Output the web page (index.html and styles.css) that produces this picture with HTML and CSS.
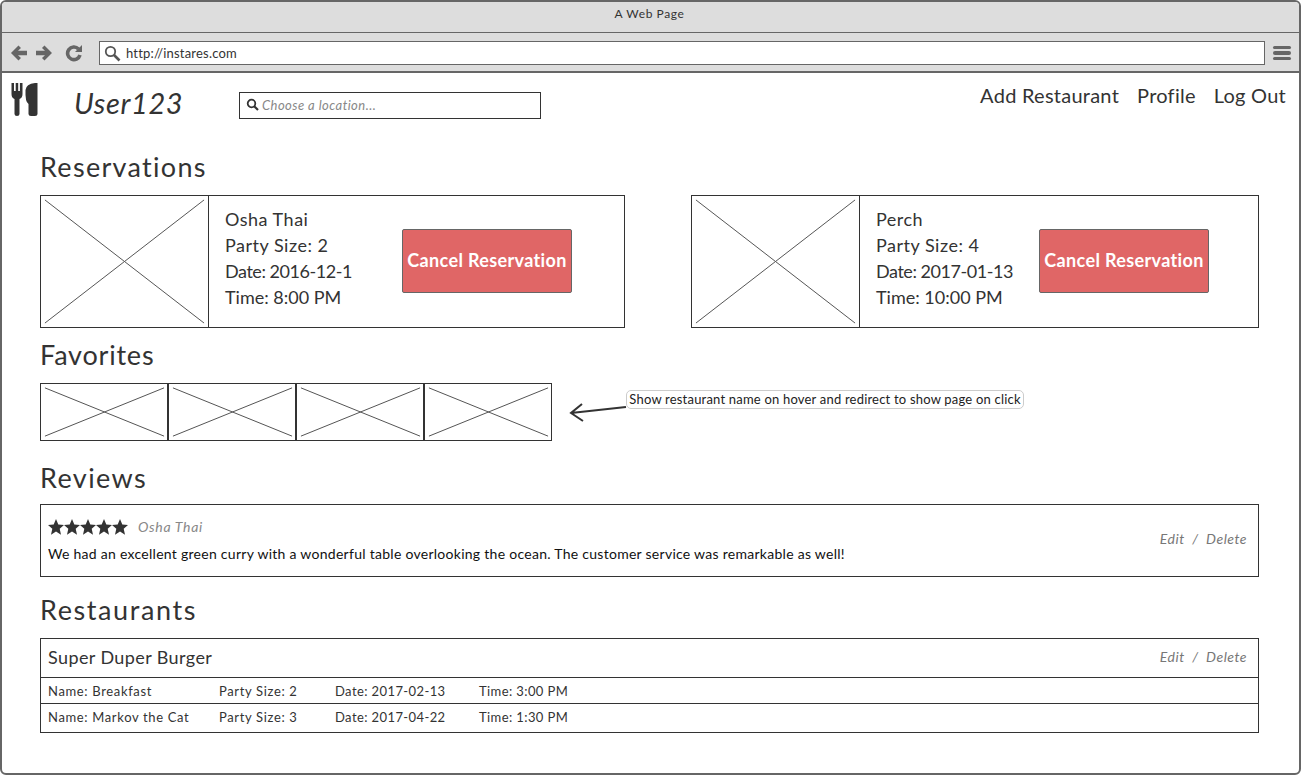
FILE: index.html
```html
<!DOCTYPE html>
<html lang="en">
<head>
    <meta charset="UTF-8">
    <meta name="viewport" content="width=device-width, initial-scale=1.0">
    <title>A Web Page</title>
    <link rel="stylesheet" href="styles.css">
</head>
<body>
    <div class="window">
        <div class="title-bar">A Web Page</div>
        <div class="toolbar">
            <svg class="nav-icon" width="18" height="18" viewBox="0 0 18 18"><path d="M8.500 1.500 L1 9 L8.500 16.500 L11 14 L8 11.300 H17 V6.700 H8 L11 4 Z" fill="#666"/></svg>
            <svg class="nav-icon" width="18" height="18" viewBox="0 0 18 18"><path d="M9.500 1.500 L17 9 L9.500 16.500 L7 14 L10 11.300 H1 V6.700 H10 L7 4 Z" fill="#666"/></svg>
            <svg class="nav-icon reload" width="18" height="18" viewBox="0 0 18 18"><path d="M13.500 5 A6.300 6.300 0 1 0 15 11" fill="none" stroke="#666" stroke-width="3.600"/><path d="M10 8 H17 V1 Z" fill="#666"/></svg>
            <div class="url-bar">
                <svg width="17" height="17" viewBox="0 0 17 17"><circle cx="6.500" cy="6.500" r="4.700" fill="none" stroke="#555" stroke-width="1.800"/><path d="M10 10 L15.500 15.500" stroke="#555" stroke-width="2.600"/></svg>
                <span>http://instares.com</span>
            </div>
            <div class="menu-icon"><i></i><i></i><i></i></div>
        </div>

        <div class="app-header">
            <svg class="logo" width="27" height="33" viewBox="0 0 27 33">
                <path d="M0.500 0 H3 V8 H4.700 V0 H7.200 V8 H8.900 V0 H11.500 V11 Q11.500 15 8.500 16 V31 Q8.500 33 6 33 Q3.500 33 3.500 31 V16 Q0.500 15 0.500 11 Z" fill="#333"/>
                <path d="M14.500 7 Q15 1 24 0 H26.500 V31 Q26.500 33 24 33 H20 Q17.500 33 17.500 31 V21 Q14 19 14.500 7 Z" fill="#333"/>
            </svg>
            <div class="user-name">User123</div>
            <div class="location-box">
                <svg width="13" height="13" viewBox="0 0 13 13"><circle cx="5.500" cy="5.500" r="3.800" fill="none" stroke="#333" stroke-width="1.800"/><path d="M8.200 8.200 L12 12" stroke="#333" stroke-width="2.200"/></svg>
                <span>Choose a location...</span>
            </div>
            <nav class="top-nav">
                <a>Add Restaurant</a>
                <a>Profile</a>
                <a>Log Out</a>
            </nav>
        </div>

        <div class="content">
            <h2>Reservations</h2>
            <div class="reservations">
                <div class="res-card res-card-first">
                    <svg class="placeholder res-img" viewBox="0 0 169 133" preserveAspectRatio="none"><path d="M4 4 L165 129 M165 4 L4 129"/></svg>
                    <div class="res-info">
                        <div>Osha Thai</div>
                        <div>Party Size: 2</div>
                        <div class="res-date">Date: 2016-12-1</div>
                        <div class="res-time">Time: 8:00 PM</div>
                    </div>
                    <button class="cancel-btn">Cancel Reservation</button>
                </div>
                <div class="res-card">
                    <svg class="placeholder res-img" viewBox="0 0 169 133" preserveAspectRatio="none"><path d="M4 4 L165 129 M165 4 L4 129"/></svg>
                    <div class="res-info">
                        <div>Perch</div>
                        <div>Party Size: 4</div>
                        <div class="res-date">Date: 2017-01-13</div>
                        <div class="res-time">Time: 10:00 PM</div>
                    </div>
                    <button class="cancel-btn">Cancel Reservation</button>
                </div>
            </div>

            <h2 class="section-title favorites-title">Favorites</h2>
            <div class="favorites">
                <svg class="placeholder thumb" viewBox="0 0 128 58" preserveAspectRatio="none"><path d="M4 4 L125 54 M125 4 L4 54"/></svg>
                <svg class="placeholder thumb" viewBox="0 0 128 58" preserveAspectRatio="none"><path d="M4 4 L125 54 M125 4 L4 54"/></svg>
                <svg class="placeholder thumb" viewBox="0 0 128 58" preserveAspectRatio="none"><path d="M4 4 L125 54 M125 4 L4 54"/></svg>
                <svg class="placeholder thumb" viewBox="0 0 128 58" preserveAspectRatio="none"><path d="M4 4 L125 54 M125 4 L4 54"/></svg>
                <svg class="note-arrow" width="58" height="24" viewBox="0 0 58 24"><path d="M57 7 L2 13 M13 4 L2 13 L14 21" fill="none" stroke="#333" stroke-width="2"/></svg>
                <div class="note">Show restaurant name on hover and redirect to show page on click</div>
            </div>

            <h2 class="section-title reviews-title">Reviews</h2>
            <div class="review">
                <div class="review-body">
                    <div class="review-top">
                        <svg width="80" height="16" viewBox="0 0 80 16">
                            <defs><polygon id="star" points="8,0 10.300,5.400 16,5.900 11.700,9.800 13,15.700 8,12.500 3,15.700 4.300,9.800 0,5.900 5.700,5.400"/></defs>
                            <use href="#star" fill="#333"/>
                            <use href="#star" x="16" fill="#333"/>
                            <use href="#star" x="32" fill="#333"/>
                            <use href="#star" x="48" fill="#333"/>
                            <use href="#star" x="64" fill="#333"/>
                        </svg>
                        <span class="review-name">Osha Thai</span>
                    </div>
                    <p>We had an excellent green curry with a wonderful table overlooking the ocean. The customer service was remarkable as well!</p>
                </div>
                <div class="actions">Edit &nbsp;/&nbsp; Delete</div>
            </div>

            <h2 class="section-title restaurants-title">Restaurants</h2>
            <div class="restaurant">
                <div class="restaurant-head">
                    <span>Super Duper Burger</span>
                    <div class="actions">Edit &nbsp;/&nbsp; Delete</div>
                </div>
                <div class="booking">
                    <span>Name: Breakfast</span>
                    <span>Party Size: 2</span>
                    <span>Date: 2017-02-13</span>
                    <span>Time: 3:00 PM</span>
                </div>
                <div class="booking booking-last">
                    <span>Name: Markov the Cat</span>
                    <span>Party Size: 3</span>
                    <span>Date: 2017-04-22</span>
                    <span>Time: 1:30 PM</span>
                </div>
            </div>
        </div>
    </div>
</body>
</html>
```

FILE: styles.css
```css
* {
    box-sizing: border-box;
}
body {
    font-family: Lato, "Open Sans", sans-serif;
    margin: 0;
    padding: 0;
    background-color: #fff;
    color: #333;
}
.window {
    height: 775px;
    border: 2px solid #666;
    border-radius: 6px;
    overflow: hidden;
}
.title-bar {
    height: 31px;
    background-color: #ddd;
    border-bottom: 1px solid #666;
    text-align: center;
    font-size: 12px;
    line-height: 24px;
    letter-spacing: 0.6px;
    padding-right: 2px;
}
.toolbar {
    height: 40px;
    background-color: #ddd;
    border-bottom: 2px solid #666;
    display: flex;
    align-items: center;
    padding: 2px 8px 0;
}
.nav-icon {
    margin-right: 7px;
}
.reload {
    margin-left: 5px;
    margin-right: 16px;
}
.url-bar {
    width: 1167px;
    height: 24px;
    background: #fff;
    border: 1px solid #666;
    display: flex;
    align-items: center;
    padding-left: 4px;
    font-size: 13px;
}
.url-bar span {
    margin-left: 5px;
    letter-spacing: 0.2px;
}
.menu-icon {
    margin-left: 8px;
    width: 18px;
}
.menu-icon i {
    display: block;
    height: 3.5px;
    margin: 2px 0;
    background-color: #666;
    border-radius: 2px;
}
.app-header {
    height: 77px;
    display: flex;
    align-items: flex-start;
    padding: 10px 13px 0 9px;
}
.user-name {
    margin-left: 36px;
    width: 165px;
    font-size: 29px;
    font-style: italic;
    line-height: 40px;
    letter-spacing: 0.6px;
}
.location-box {
    margin-top: 9px;
    width: 302px;
    height: 27px;
    border: 1px solid #333;
    display: flex;
    align-items: center;
    padding: 0 0 2px 6px;
    font-size: 13px;
    font-style: italic;
    color: #888;
}
.location-box span {
    margin-left: 3px;
    letter-spacing: 0.45px;
}
.top-nav {
    margin-left: auto;
    display: flex;
    gap: 18px;
    font-size: 20px;
    line-height: 25px;
    letter-spacing: 0.25px;
}
.content {
    padding: 0 40px 0 38px;
}
h2 {
    margin: 0 0 11px;
    font-size: 27px;
    font-weight: 400;
    line-height: 34px;
    letter-spacing: 1.3px;
}
.section-title {
    margin-top: 10px;
}
.favorites-title {
    letter-spacing: 0.8px;
}
.reviews-title {
    margin-top: 20px;
    margin-bottom: 9px;
    letter-spacing: 1.4px;
}
.restaurants-title {
    margin-top: 16px;
    letter-spacing: 1.6px;
}
.reservations {
    display: flex;
    justify-content: space-between;
}
.res-card {
    width: 568px;
    height: 133px;
    border: 1px solid #333;
    display: flex;
    align-items: center;
    justify-content: space-between;
    padding-right: 49px;
}
.res-card-first {
    width: 585px;
    padding-right: 52px;
}
.placeholder {
    display: block;
    border: 1px solid #333;
    fill: none;
    stroke: #555;
    stroke-width: 1;
}
.placeholder path {
    vector-effect: non-scaling-stroke;
}
.res-img {
    width: 169px;
    height: 133px;
    margin: -1px 0 -1px -1px;
    flex-shrink: 0;
}
.res-info {
    margin-left: 16px;
    padding-bottom: 8px;
    font-size: 18px;
    line-height: 26px;
    letter-spacing: 0.5px;
}
.res-date {
    letter-spacing: -0.45px;
}
.res-time {
    letter-spacing: 0;
}
.cancel-btn {
    margin: 0 0 2px auto;
    width: 170px;
    height: 64px;
    padding: 0 0 2px;
    background-color: #e06666;
    border: 1px solid #666;
    border-radius: 2px;
    color: #fff;
    font-family: inherit;
    font-size: 18px;
    font-weight: 700;
    letter-spacing: 0.35px;
    white-space: nowrap;
}
.favorites {
    height: 58px;
    display: flex;
    align-items: flex-start;
}
.thumb {
    width: 128px;
    height: 58px;
}
.note-arrow {
    margin: 17px 0 0 17px;
}
.note {
    margin: 7px 0 0 -1px;
    height: 19px;
    width: 398px;
    border: 1px solid #ccc;
    border-radius: 5px;
    background: #fff;
    color: #222;
    font-size: 13px;
    line-height: 16px;
    text-align: center;
    white-space: nowrap;
    letter-spacing: 0.2px;
}
.review {
    height: 73px;
    border: 1px solid #333;
    display: flex;
    align-items: center;
    justify-content: space-between;
    padding: 0 11px 1px 7px;
}
.review-top {
    display: flex;
    align-items: center;
    gap: 10px;
    margin-bottom: 10px;
}
.review-name {
    font-size: 14px;
    font-style: italic;
    color: #888;
    letter-spacing: 0.7px;
}
.review p {
    margin: 0;
    font-size: 14px;
    color: #111;
    letter-spacing: 0.275px;
}
.actions {
    font-size: 14px;
    font-style: italic;
    color: #777;
    letter-spacing: 0.5px;
}
.review .actions {
    margin-bottom: 4px;
}
.restaurant {
    border: 1px solid #333;
    font-size: 13px;
    letter-spacing: 0.4px;
}
.restaurant-head {
    height: 38px;
    display: flex;
    align-items: center;
    justify-content: space-between;
    padding: 0 11px 3px 7px;
    font-size: 18px;
    letter-spacing: 0.4px;
}
.booking {
    height: 26px;
    border-top: 1px solid #333;
    display: grid;
    grid-template-columns: 171px 116px 144px 1fr;
    align-items: center;
    padding-left: 7px;
}
.booking span:nth-child(-n+2) {
    letter-spacing: 0.65px;
}
.booking-last {
    height: 29px;
    padding-bottom: 2px;
}
```
